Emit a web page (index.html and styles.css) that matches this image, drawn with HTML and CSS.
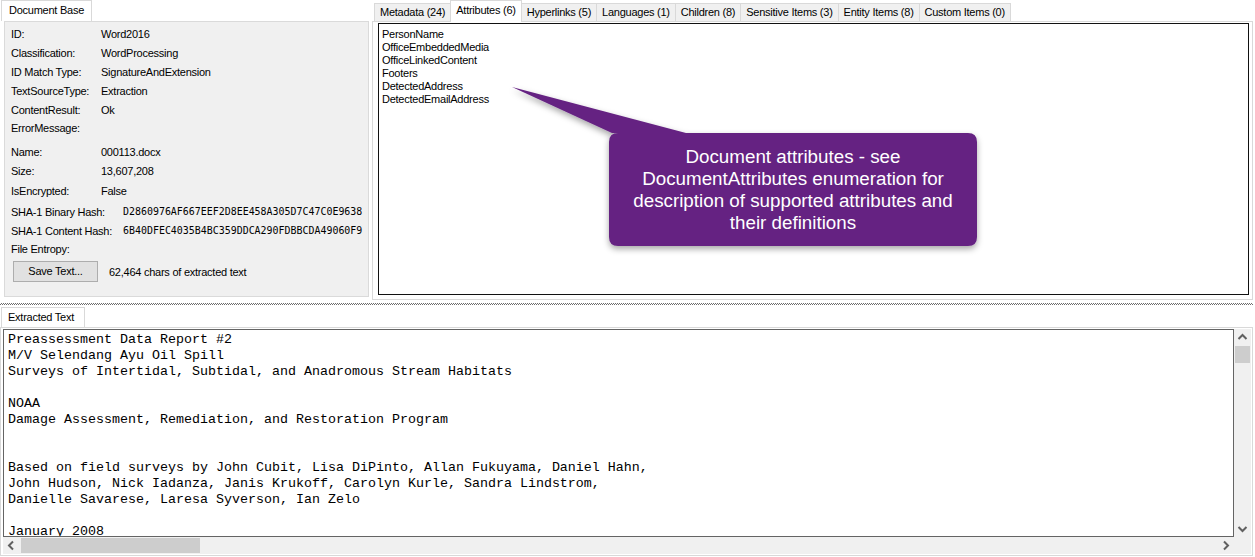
FILE: index.html
```html
<!DOCTYPE html>
<html>
<head>
<meta charset="utf-8">
<link rel="stylesheet" href="styles.css">
</head>
<body>
<div class="top">
  <div class="left">
    <div class="tabstrip tabs-left"><div class="tab sel">Document Base</div></div>
    <div class="page-left">
      <div class="row"><span class="lbl">ID:</span><span>Word2016</span></div>
      <div class="row"><span class="lbl">Classification:</span><span>WordProcessing</span></div>
      <div class="row"><span class="lbl">ID Match Type:</span><span>SignatureAndExtension</span></div>
      <div class="row"><span class="lbl">TextSourceType:</span><span>Extraction</span></div>
      <div class="row"><span class="lbl">ContentResult:</span><span>Ok</span></div>
      <div class="row up1"><span class="lbl">ErrorMessage:</span><span></span></div>
      <div class="row gap5"><span class="lbl">Name:</span><span>000113.docx</span></div>
      <div class="row"><span class="lbl">Size:</span><span>13,607,208</span></div>
      <div class="row gap1"><span class="lbl">IsEncrypted:</span><span>False</span></div>
      <div class="row gap2"><span class="lbl wide">SHA-1 Binary Hash:</span><span class="hash">D2860976AF667EEF2D8EE458A305D7C47C0E9638</span></div>
      <div class="row"><span class="lbl wide">SHA-1 Content Hash:</span><span class="hash">6B40DFEC4035B4BC359DDCA290FDBBCDA49060F9</span></div>
      <div class="row up1"><span class="lbl">File Entropy:</span><span></span></div>
      <div class="btnrow"><div class="btn">Save Text...</div><span>62,464 chars of extracted text</span></div>
    </div>
  </div>
  <div class="right">
    <div class="tabstrip tabs-right">
      <div class="tab">Metadata (24)</div>
      <div class="tab sel">Attributes (6)</div>
      <div class="tab">Hyperlinks (5)</div>
      <div class="tab">Languages (1)</div>
      <div class="tab">Children (8)</div>
      <div class="tab">Sensitive Items (3)</div>
      <div class="tab">Entity Items (8)</div>
      <div class="tab">Custom Items (0)</div>
    </div>
    <div class="page-right">
      <div class="listbox">
        <div>PersonName</div>
        <div>OfficeEmbeddedMedia</div>
        <div>OfficeLinkedContent</div>
        <div>Footers</div>
        <div>DetectedAddress</div>
        <div>DetectedEmailAddress</div>
      </div>
    </div>
  </div>
</div>
<div class="splitter"><div class="dots"></div></div>
<div class="bottom">
  <div class="tabstrip tabs-bottom"><div class="tab sel">Extracted Text</div></div>
  <div class="frame">
    <div class="textbox"><pre class="mono">Preassessment Data Report #2
M/V Selendang Ayu Oil Spill
Surveys of Intertidal, Subtidal, and Anadromous Stream Habitats

NOAA
Damage Assessment, Remediation, and Restoration Program


Based on field surveys by John Cubit, Lisa DiPinto, Allan Fukuyama, Daniel Hahn,
John Hudson, Nick Iadanza, Janis Krukoff, Carolyn Kurle, Sandra Lindstrom,
Danielle Savarese, Laresa Syverson, Ian Zelo

January 2008</pre></div>
    <div class="vscroll">
      <svg class="arr" width="17" height="17" viewBox="0 0 17 17"><path d="M4.5 10 L8.5 6 L12.5 10" fill="none" stroke="#606060" stroke-width="2"/></svg>
      <div class="vthumb"></div>
      <div class="vspace"></div>
      <svg class="arr" width="17" height="17" viewBox="0 0 17 17"><path d="M4.5 7 L8.5 11 L12.5 7" fill="none" stroke="#606060" stroke-width="2"/></svg>
    </div>
    <div class="hscroll">
      <svg class="arr" width="17" height="17" viewBox="0 0 17 17"><path d="M10 4.5 L6 8.5 L10 12.5" fill="none" stroke="#606060" stroke-width="2"/></svg>
      <div class="hthumb"></div>
      <div class="hspace"></div>
      <svg class="arr" width="17" height="17" viewBox="0 0 17 17"><path d="M7 4.5 L11 8.5 L7 12.5" fill="none" stroke="#606060" stroke-width="2"/></svg>
    </div>
    <div class="corner"></div>
  </div>
</div>
<div class="callout">
  <svg class="callout-shape" width="500" height="190" viewBox="500 80 500 190">
    <defs>
      <filter id="sh" x="-10%" y="-10%" width="120%" height="130%">
        <feDropShadow dx="0" dy="3" stdDeviation="3" flood-color="#000" flood-opacity="0.35"/>
      </filter>
    </defs>
    <g filter="url(#sh)">
      <path d="M512 87 L686 133 L968 133 Q977 133 977 142 L977 237 Q977 246 968 246 L618 246 Q609 246 609 237 L609 142 Q609 133 618 133 L612 133 Z" fill="#652382"/>
    </g>
  </svg>
  <div class="callout-text">Document attributes - see<br>DocumentAttributes enumeration for<br>description of supported attributes and<br>their definitions</div>
</div>
</body>
</html>
```
FILE: styles.css
```css
* { box-sizing: border-box; }
body {
  margin: 0;
  width: 1255px;
  height: 557px;
  overflow: hidden;
  background: #fff;
  font-family: "Liberation Sans", Arial, sans-serif;
  font-size: 11px;
  letter-spacing: -0.25px;
  color: #000;
  position: relative;
}
.top { display: flex; height: 300px; }
.left { width: 372px; padding-left: 1px; }
.right { width: 881px; }
.tabstrip { display: flex; align-items: flex-end; height: 21px; }
.tab {
  height: 18px;
  line-height: 17px;
  padding: 0 5px;
  background: #f0f0f0;
  border: 1px solid #d9d9d9;
  border-bottom: none;
  margin-right: -1px;
  white-space: nowrap;
}
.tab.sel {
  background: #fff;
  height: 21px;
  line-height: 19px;
  position: relative;
  z-index: 1;
}
.tabs-left .tab.sel { width: 91px; padding: 0 0 0 7px; }
.tabs-right { padding-left: 2px; }
.tabs-right .tab { padding: 0 5px 0 5px; }
.tabs-right .tab.sel { height: 22px; margin-bottom: -1px; line-height: 18px; padding: 0 5px 0 5px; }
.page-left {
  margin-left: 3px;
  width: 365px;
  height: 276px;
  background: #f0f0f0;
  border: 1px solid #dadada;
  padding: 2px 0 0 6px;
}
.row { display: flex; align-items: center; height: 19px; white-space: nowrap; }
.up1 { margin-top: -1px; }
.gap5 { margin-top: 5px; }
.gap1 { margin-top: 1px; }
.gap2 { margin-top: 2px; }
.lbl { width: 90px; flex: none; }
.lbl.wide { width: 112px; }
.hash {
  font-family: "DejaVu Sans Mono", monospace;
  font-size: 9.95px;
  letter-spacing: 0;
}
.btnrow { display: flex; align-items: center; margin-top: 3px; padding-left: 2px; white-space: nowrap; }
.btn {
  width: 85px;
  height: 21px;
  line-height: 19px;
  text-align: center;
  background: #e1e1e1;
  border: 1px solid #adadad;
  margin-right: 11px;
}
.page-right {
  width: 881px;
  height: 279px;
  background: #fff;
  border: 1px solid #d9d9d9;
  padding: 1px 0 0 5px;
}
.listbox {
  width: 871px;
  height: 272px;
  border: 1px solid #111;
  padding: 4px 0 0 3px;
  line-height: 13px;
}
.splitter { height: 7px; padding-top: 3px; }
.dots {
  height: 2px;
  width: 1253px;
  background: repeating-conic-gradient(#6e6e6e 0 25%, #fff 0 50%) 0 0 / 2px 2px;
}
.tabs-bottom { height: 20px; padding-left: 1px; }
.tabs-bottom .tab.sel { width: 84px; height: 20px; padding-left: 6px; line-height: 19px; }
.frame {
  width: 1253px;
  height: 229px;
  border: 1px solid #d9d9d9;
  padding: 1px 1px 1px 2px;
  display: grid;
  grid-template-columns: 1231px 17px;
  grid-template-rows: 208px 17px;
}
.textbox {
  border: 1px solid #646464;
  overflow: hidden;
  background: #fff;
}
.mono {
  margin: 0;
  padding: 2px 0 0 4px;
  font-family: "Liberation Mono", "Courier New", monospace;
  font-size: 13.33px;
  line-height: 16px;
  letter-spacing: 0;
  color: #000;
}
.vscroll {
  background: #f0f0f0;
  display: flex;
  flex-direction: column;
  align-items: center;
}
.vthumb { width: 15px; height: 17px; background: #cdcdcd; flex: none; }
.vspace { flex: 1; }
.hscroll {
  background: #f0f0f0;
  display: flex;
  align-items: center;
}
.hthumb { width: 179px; height: 15px; background: #cdcdcd; margin-left: 1px; flex: none; }
.hspace { flex: 1; }
.arr { display: block; flex: none; }
.corner { background: #f0f0f0; }
.callout {
  position: absolute;
  left: 500px;
  top: 80px;
  width: 500px;
  height: 190px;
}
.callout-shape { position: absolute; left: 0; top: 0; }
.callout-text {
  position: absolute;
  left: 109px;
  top: 53px;
  width: 368px;
  height: 113px;
  display: flex;
  align-items: center;
  justify-content: center;
  text-align: center;
  color: #fff;
  font-family: "Liberation Sans", Arial, sans-serif;
  font-size: 18.8px;
  letter-spacing: 0;
  line-height: 22px;
}
```
